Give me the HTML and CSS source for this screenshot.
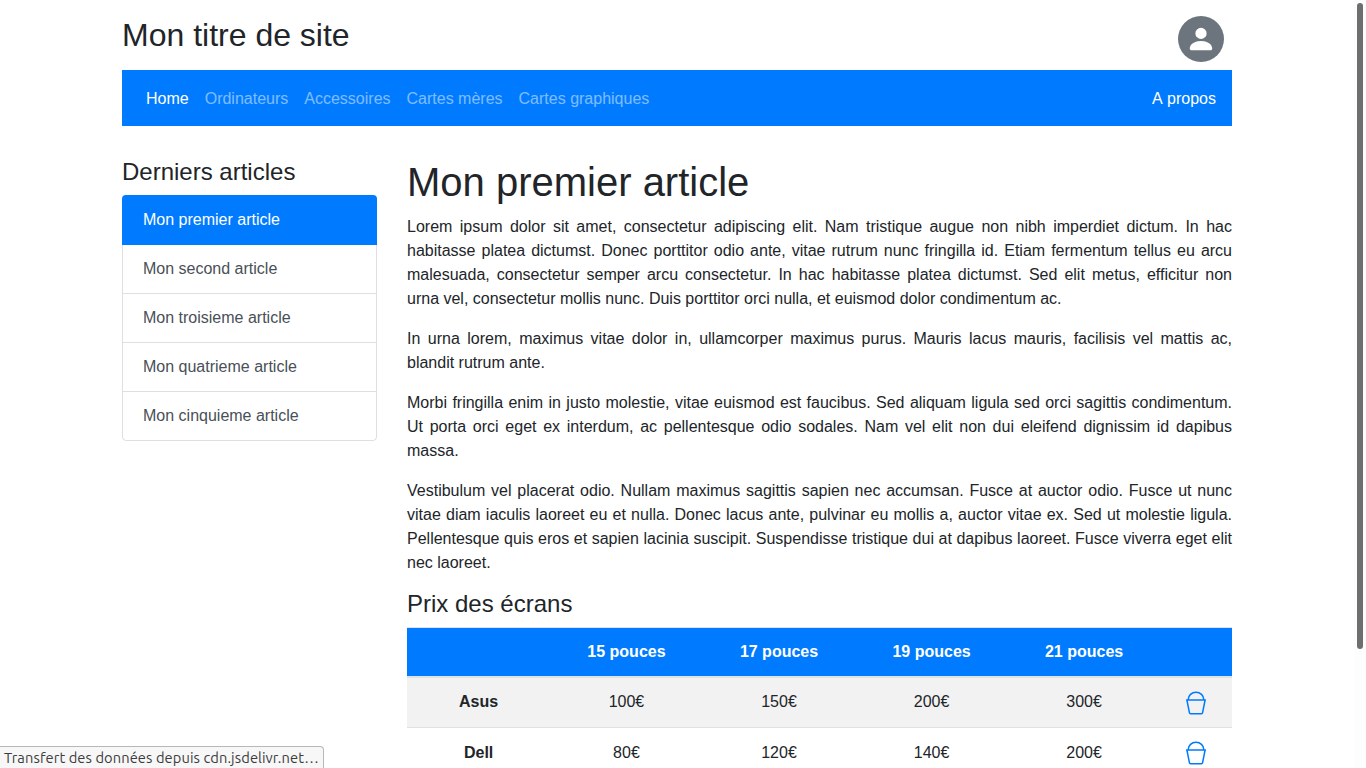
FILE: index.html
```html
<!DOCTYPE html>
<html lang="fr">
<head>
<meta charset="utf-8">
<title>Mon titre de site</title>
<link rel="stylesheet" href="styles.css">
</head>
<body>
<svg class="defs" aria-hidden="true">
  <symbol id="bucket" viewBox="0 0 24 24">
    <path d="M4.2 8.6a7.8 7.4 0 0 1 15.6 0M2.6 9h18.8M2.9 9L5.4 21.6a1.3 1.3 0 0 0 1.3 1.1h10.6a1.3 1.3 0 0 0 1.3-1.1L21.1 9" fill="none" stroke="currentColor" stroke-width="1.5" stroke-linecap="round"/>
  </symbol>
</svg>
<div class="container">
  <header class="header">
    <h2 class="site-title">Mon titre de site</h2>
    <a class="avatar" href="#" aria-label="Compte">
      <svg viewBox="0 0 16 16" width="30" height="30"><path fill="currentColor" d="M3 14s-1 0-1-1 1-4 6-4 6 3 6 4-1 1-1 1H3zm5-6a3 3 0 1 0 0-6 3 3 0 0 0 0 6z"/></svg>
    </a>
  </header>
  <nav class="navbar">
    <a class="active" href="#">Home</a>
    <a href="#">Ordinateurs</a>
    <a href="#">Accessoires</a>
    <a href="#">Cartes mères</a>
    <a href="#">Cartes graphiques</a>
    <a class="about" href="#">A propos</a>
  </nav>
  <div class="row">
    <aside class="sidebar">
      <h4>Derniers articles</h4>
      <div class="list">
        <a class="item active" href="#">Mon premier article</a>
        <a class="item" href="#">Mon second article</a>
        <a class="item" href="#">Mon troisieme article</a>
        <a class="item" href="#">Mon quatrieme article</a>
        <a class="item" href="#">Mon cinquieme article</a>
      </div>
    </aside>
    <main class="article">
      <h1>Mon premier article</h1>
      <p>Lorem ipsum dolor sit amet, consectetur adipiscing elit. Nam tristique augue non nibh imperdiet dictum. In hac habitasse platea dictumst. Donec porttitor odio ante, vitae rutrum nunc fringilla id. Etiam fermentum tellus eu arcu malesuada, consectetur semper arcu consectetur. In hac habitasse platea dictumst. Sed elit metus, efficitur non urna vel, consectetur mollis nunc. Duis porttitor orci nulla, et euismod dolor condimentum ac.</p>
      <p>In urna lorem, maximus vitae dolor in, ullamcorper maximus purus. Mauris lacus mauris, facilisis vel mattis ac, blandit rutrum ante.</p>
      <p>Morbi fringilla enim in justo molestie, vitae euismod est faucibus. Sed aliquam ligula sed orci sagittis condimentum. Ut porta orci eget ex interdum, ac pellentesque odio sodales. Nam vel elit non dui eleifend dignissim id dapibus massa.</p>
      <p>Vestibulum vel placerat odio. Nullam maximus sagittis sapien nec accumsan. Fusce at auctor odio. Fusce ut nunc vitae diam iaculis laoreet eu et nulla. Donec lacus ante, pulvinar eu mollis a, auctor vitae ex. Sed ut molestie ligula. Pellentesque quis eros et sapien lacinia suscipit. Suspendisse tristique dui at dapibus laoreet. Fusce viverra eget elit nec laoreet.</p>
      <h4>Prix des écrans</h4>
      <table class="prices">
        <colgroup><col class="brand"><col class="size"><col class="size"><col class="size"><col class="size"><col></colgroup>
        <thead><tr><th></th><th>15 pouces</th><th>17 pouces</th><th>19 pouces</th><th>21 pouces</th><th></th></tr></thead>
        <tbody>
          <tr><th>Asus</th><td>100€</td><td>150€</td><td>200€</td><td>300€</td><td><svg class="bucket"><use href="#bucket"/></svg></td></tr>
          <tr><th>Dell</th><td>80€</td><td>120€</td><td>140€</td><td>200€</td><td><svg class="bucket"><use href="#bucket"/></svg></td></tr>
        </tbody>
      </table>
    </main>
  </div>
</div>
<div class="scrollbar"><div class="thumb"></div></div>
<div class="status">Transfert des données depuis cdn.jsdelivr.net…</div>
</body>
</html>
```
FILE: styles.css
```css
*, *::before, *::after { box-sizing: border-box; }
html { height: 100%; overflow: hidden; }
body {
  margin: 0;
  height: 100%;
  overflow: hidden;
  padding-right: 12px;
  background: #fff;
  color: #212529;
  font: 16px/1.5 "Liberation Sans", Arial, sans-serif;
}
a { text-decoration: none; color: inherit; }
h1, h2, h4 { margin: 0 0 8px; font-weight: 500; line-height: 1.2; }
h1 { margin-bottom: 8.6px; font-size: 40px; }
h2 { font-size: 32px; }
h4 { font-size: 24px; }
p { margin: 0 0 16px; text-align: justify; }
p:last-of-type { margin-bottom: 15.4px; }
.defs { position: absolute; width: 0; height: 0; }
.container { width: 1140px; margin: 0 auto; padding: 0 15px; }
.header {
  display: flex;
  justify-content: space-between;
  align-items: flex-start;
  height: 70.4px;
  padding: 16px 8px 0 0;
}
.avatar {
  display: flex;
  align-items: center;
  justify-content: center;
  width: 46px;
  height: 46px;
  border-radius: 50%;
  background: #6c757d;
  color: #fff;
}
.navbar {
  display: flex;
  align-items: center;
  height: 56px;
  padding: 1.2px 8px 0 16px;
  background: #007bff;
  color: rgba(255, 255, 255, .5);
}
.navbar a { padding: 8px; }
.navbar .active, .navbar .about { color: #fff; }
.navbar .about { margin-left: auto; font-kerning: none; }
.row { display: flex; gap: 30px; padding-top: 32px; }
.sidebar { width: 255px; }
.article { width: 825px; }
.list {
  border: 1px solid rgba(0, 0, 0, .125);
  border-radius: 4px;
}
.item {
  display: block;
  height: 49px;
  padding: 12px 20px;
  border-bottom: 1px solid rgba(0, 0, 0, .125);
  color: #495057;
}
.item:last-child { height: 48px; border-bottom: 0; }
.item.active {
  height: 50px;
  margin: -1px -1px 0;
  padding: 13px 21px 12px;
  border-bottom-color: #007bff;
  border-radius: 4px 4px 0 0;
  background: #007bff;
  color: #fff;
}
.prices {
  width: 825px;
  table-layout: fixed;
  border-collapse: collapse;
  text-align: center;
}
.brand { width: 143.2px; }
.size { width: 152.55px; }
.prices th, .prices td {
  padding: 12px;
  border-top: 1px solid #dee2e6;
  vertical-align: top;
}
.prices thead th {
  height: 49px;
  border-bottom: 2px solid #dee2e6;
  background: #007bff;
  color: #fff;
}
.prices tbody th, .prices tbody td { padding-bottom: 11px; }
.prices tbody tr { height: 50px; }
.prices tbody tr:nth-child(odd) { background: rgba(0, 0, 0, .05); }
.prices tbody tr + tr th, .prices tbody tr + tr td { padding-top: 13px; }
.bucket {
  display: block;
  width: 24px;
  height: 24px;
  margin: 1px auto 0;
  color: #007bff;
}
.prices tr + tr .bucket { margin-top: 0; }
.scrollbar {
  position: fixed;
  top: 0;
  right: 0;
  width: 12px;
  height: 100%;
  padding: 3px 3px 0;
  background: #fdfdfd;
}
.thumb { width: 6px; height: 646px; border-radius: 3px; background: #6e6e6e; }
.status {
  position: fixed;
  left: 0;
  bottom: 0;
  width: 324px;
  height: 22px;
  padding-left: 4px;
  border: 1px solid #b8b8b8;
  border-width: 1px 1px 0 0;
  border-top-right-radius: 4px;
  background: #f7f7f7;
  color: #3c3c3c;
  font: 14.67px/21px Ubuntu, "Noto Sans", sans-serif;
  letter-spacing: .09px;
  white-space: nowrap;
}
```
